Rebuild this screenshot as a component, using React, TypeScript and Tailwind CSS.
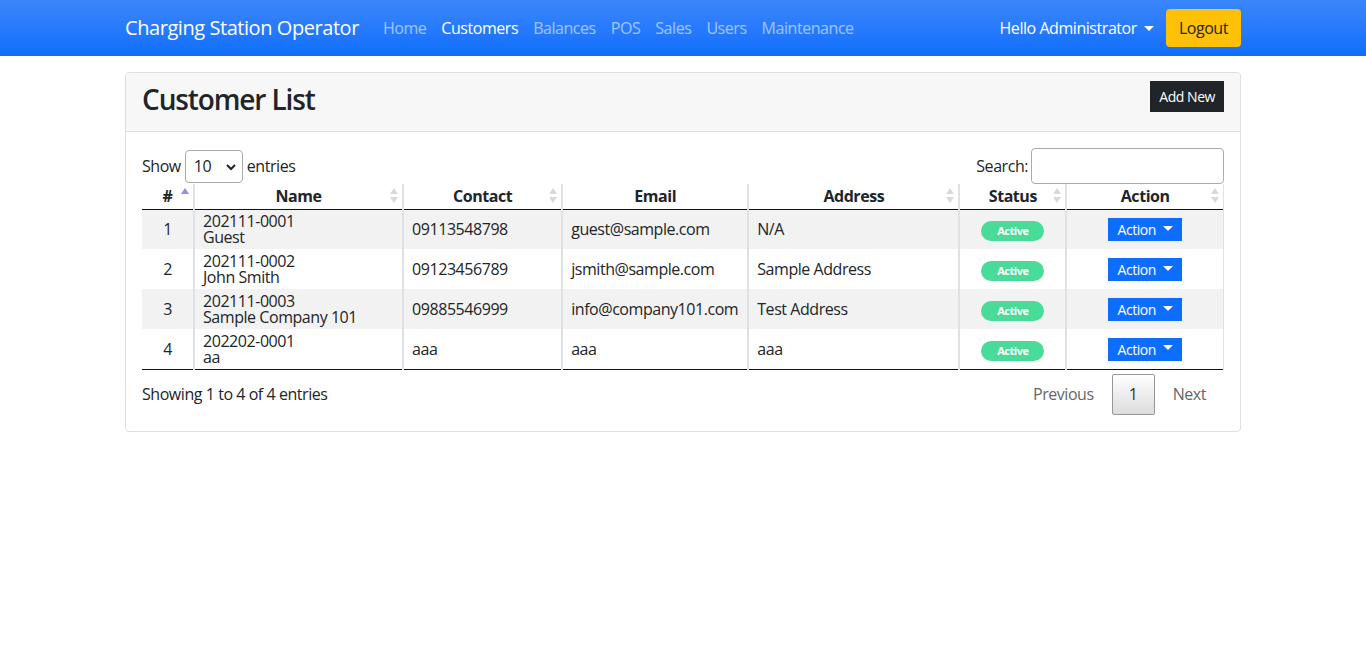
import React from 'react';

const rows = [
  { n: 1, code: '202111-0001', name: 'Guest', contact: '09113548798', email: 'guest@sample.com', address: 'N/A' },
  { n: 2, code: '202111-0002', name: 'John Smith', contact: '09123456789', email: 'jsmith@sample.com', address: 'Sample Address' },
  { n: 3, code: '202111-0003', name: 'Sample Company 101', contact: '09885546999', email: 'info@company101.com', address: 'Test Address' },
  { n: 4, code: '202202-0001', name: 'aa', contact: 'aaa', email: 'aaa', address: 'aaa' },
];

function SortIcon({ active }: { active?: boolean }) {
  return (
    <svg width="8" height="16" viewBox="0 0 8 16" className="absolute right-[4px] top-[3px]">
      <path d="M0 7 L4 1 L8 7 Z" fill={active ? '#8f8fe0' : '#d9d9d9'} />
      {!active && <path d="M0 10 L4 16 L8 10 Z" fill="#d9d9d9" />}
    </svg>
  );
}

function Caret() {
  return (
    <svg width="10" height="6" viewBox="0 0 10 6" className="inline-block ml-[7px] mb-[2px]">
      <path d="M0 0 L10 0 L5 5 Z" fill="currentColor" />
    </svg>
  );
}

const headers = [
  { label: '#', w: 'w-[52px]', active: true },
  { label: 'Name', w: 'w-[209px]' },
  { label: 'Contact', w: 'w-[159px]' },
  { label: 'Email', w: 'w-[186px]', noSort: true },
  { label: 'Address', w: 'w-[211px]' },
  { label: 'Status', w: 'w-[107px]' },
  { label: 'Action', w: 'w-[157px]' },
];

export default function App() {
  return (
    <div
      className="min-h-[649px] bg-white text-[#212529] text-[16px] tracking-[-0.028em]"
      style={{ fontFamily: '"Open Sans", "Noto Sans", sans-serif' }}
    >
      <nav className="h-[56px] bg-gradient-to-b from-[#3a86fb] to-[#0d6efd]">
        <div className="w-[1116px] mx-auto h-full flex items-center">
          <span className="text-[20px] text-white mr-[24px] tracking-[-0.022em]">Charging Station Operator</span>
          <div className="flex items-center gap-[15px] text-[16px]">
            <a className="text-white/55">Home</a>
            <a className="text-white">Customers</a>
            <a className="text-white/55">Balances</a>
            <a className="text-white/55">POS</a>
            <a className="text-white/55">Sales</a>
            <a className="text-white/55">Users</a>
            <a className="text-white/55">Maintenance</a>
          </div>
          <div className="ml-auto flex items-center">
            <span className="text-white mr-[12px]">Hello Administrator<Caret /></span>
            <button className="bg-[#ffc107] text-[#212529] rounded-[4px] h-[38px] px-[13px]">Logout</button>
          </div>
        </div>
      </nav>

      <div className="w-[1116px] mx-auto mt-[16px] border border-[#dfdfdf] rounded-[4px]">
        <div className="h-[59px] bg-[#f7f7f7] border-b border-[#dfdfdf] flex items-start justify-between px-[16px] rounded-t-[4px]">
          <h1 className="text-[28px] font-semibold leading-none mt-[12px] tracking-[-0.04em]">Customer List</h1>
          <button className="bg-[#212529] text-white text-[14px] h-[31px] px-[9px] mt-[8px]">Add New</button>
        </div>
        <div className="px-[16px] pt-[16px] pb-[16px]">
          <div className="flex items-center justify-between h-[36px]">
            <div className="flex items-center gap-[4px]">
              <span>Show</span>
              <div className="relative w-[58px] h-[33px] border border-[#aaa] rounded-[4px] flex items-center pl-[8px]">
                <span>10</span>
                <svg width="10" height="7" viewBox="0 0 10 7" className="absolute right-[6px] top-[13px]">
                  <path d="M1 1 L5 5 L9 1" stroke="#222" strokeWidth="2" fill="none" />
                </svg>
              </div>
              <span>entries</span>
            </div>
            <div className="flex items-center gap-[3px]">
              <span>Search:</span>
              <div className="w-[193px] h-[36px] border border-[#aaa] rounded-[4px]" />
            </div>
          </div>

          <table className="w-[1082px] border-collapse table-fixed">
            <thead>
              <tr className="border-b border-[#111]">
                {headers.map((h, i) => (
                  <th
                    key={h.label}
                    className={`${h.w} relative h-[25px] font-bold text-[16px] text-center p-0 border-[#dee2e6] ${i > 0 ? 'border-l-2' : ''} ${i === headers.length - 1 ? 'border-r' : ''}`}
                  >
                    {h.label}
                    {!h.noSort && <SortIcon active={h.active} />}
                  </th>
                ))}
              </tr>
            </thead>
            <tbody className="border-b border-[#111]">
              {rows.map((r) => (
                <tr key={r.n} className={r.n % 2 === 1 ? 'bg-[#f2f2f2]' : 'bg-white'}>
                  <td className="h-[40px] text-center p-0">{r.n}</td>
                  <td className="px-[8px] border-l-2 border-[#dee2e6] leading-[16px]">
                    <div>{r.code}</div>
                    <div>{r.name}</div>
                  </td>
                  <td className="px-[8px] border-l-2 border-[#dee2e6]">{r.contact}</td>
                  <td className="px-[8px] border-l-2 border-[#dee2e6]">{r.email}</td>
                  <td className="px-[8px] border-l-2 border-[#dee2e6]">{r.address}</td>
                  <td className="border-l-2 border-[#dee2e6] text-center">
                    <span className="inline-block bg-[#48dc98] text-white text-[11px] font-bold rounded-full w-[63px] h-[20px] leading-[20px]">Active</span>
                  </td>
                  <td className="border-l-2 border-r border-[#dee2e6] text-center">
                    <span className="inline-flex items-center justify-center bg-[#0d6efd] text-white text-[14px] w-[74px] h-[23px]">Action<Caret /></span>
                  </td>
                </tr>
              ))}
            </tbody>
          </table>

          <div className="flex items-center justify-between mt-[4px]">
            <span>Showing 1 to 4 of 4 entries</span>
            <div className="flex items-center text-[#666]">
              <span className="px-[18px]">Previous</span>
              <span className="w-[43px] h-[41px] flex items-center justify-center border border-[#979797] rounded-[2px] bg-gradient-to-b from-white to-[#dcdcdc] text-[#333]">1</span>
              <span className="px-[18px]">Next</span>
            </div>
          </div>
        </div>
      </div>
    </div>
  );
}
